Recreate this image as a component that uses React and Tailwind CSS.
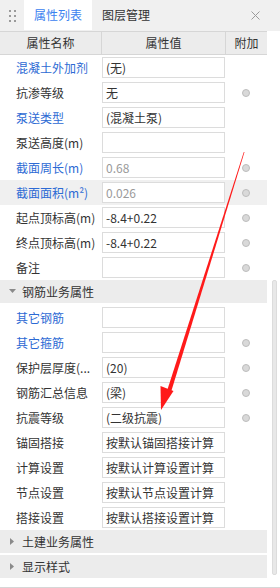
import React from "react";

const rows1 = [
  { label: "混凝土外加剂", blue: true, value: "(无)", dot: false },
  { label: "抗渗等级", value: "无", dot: true },
  { label: "泵送类型", blue: true, value: "(混凝土泵)", dot: false },
  { label: "泵送高度(m)", value: "", dot: false },
  { label: "截面周长(m)", blue: true, value: "0.68", gray: true, dot: true },
  { label: "截面面积(m²)", blue: true, value: "0.026", gray: true, dot: true, hl: true },
  { label: "起点顶标高(m)", value: "-8.4+0.22", dot: true },
  { label: "终点顶标高(m)", value: "-8.4+0.22", dot: true },
  { label: "备注", value: "", dot: true },
];

const rows2 = [
  { label: "其它钢筋", blue: true, value: "", dot: false },
  { label: "其它箍筋", blue: true, value: "", dot: true },
  { label: "保护层厚度(...", value: "(20)", dot: true },
  { label: "钢筋汇总信息", value: "(梁)", dot: true },
  { label: "抗震等级", value: "(二级抗震)", dot: true },
  { label: "锚固搭接", value: "按默认锚固搭接计算", dot: false },
  { label: "计算设置", value: "按默认计算设置计算", dot: false },
  { label: "节点设置", value: "按默认节点设置计算", dot: false },
  { label: "搭接设置", value: "按默认搭接设置计算", dot: false },
];

function Row({ r }) {
  return (
    <div className={`flex h-[25px] items-center ${r.hl ? "bg-[#f0f0f0]" : ""}`}>
      <div
        className={`w-[102px] pl-[16px] whitespace-nowrap overflow-hidden text-[12px] ${
          r.blue ? "text-[#2d6ad4]" : "text-[#333333]"
        }`}
      >
        {r.label}
      </div>
      <div
        className={`w-[123px] h-[21px] border border-[#dcdcdc] bg-white flex items-center pl-[3px] text-[12px] whitespace-nowrap overflow-hidden ${
          r.gray ? "text-[#9a9a9a]" : "text-[#333333]"
        }`}
      >
        {r.value}
      </div>
      <div className="flex-1 flex items-center justify-center">
        {r.dot && (
          <div className="w-[8px] h-[8px] rounded-full bg-[#d9d9d9] border border-[#bdbdbd]" />
        )}
      </div>
    </div>
  );
}

function Group({ label, open }) {
  return (
    <div className="h-[25px]">
      <div className="h-[23px] bg-[#ececec] flex items-center text-[12px] text-[#333333]">
        <div className="w-[22px] flex items-center justify-center pl-[2px]">
          {open ? (
            <svg width="7" height="5" viewBox="0 0 7 5">
              <path d="M0 0 L7 0 L3.5 4 Z" fill="#8a8a8a" />
            </svg>
          ) : (
            <svg width="5" height="7" viewBox="0 0 5 7">
              <path d="M0 0 L4 3.5 L0 7 Z" fill="#8a8a8a" />
            </svg>
          )}
        </div>
        <span>{label}</span>
      </div>
    </div>
  );
}

export default function App() {
  return (
    <div
      className="relative w-[280px] h-[588px] bg-white overflow-hidden flex flex-col"
      style={{ fontFamily: '"Noto Sans CJK SC", "Noto Sans", sans-serif' }}
    >
      {/* tab bar */}
      <div className="h-[31px] bg-[#f0f0f0] flex items-stretch shrink-0">
        <div className="w-[24px] flex items-center justify-center">
          <div className="grid grid-cols-2 gap-x-[3px] gap-y-[3px]">
            {[0, 1, 2, 3, 4, 5].map((i) => (
              <div key={i} className="w-[2px] h-[2px] bg-[#9a9a9a]" />
            ))}
          </div>
        </div>
        <div className="w-[68px] h-[30px] bg-white flex items-center justify-center text-[12px] text-[#3b82f0]">
          属性列表
        </div>
        <div className="w-[68px] flex items-center justify-center text-[12px] text-[#333333] pb-[1px]">
          图层管理
        </div>
        <div className="flex-1" />
        <div className="w-[38px] flex items-center justify-center pr-[20px] pl-[8px]">
          <svg width="9" height="9" viewBox="0 0 9 9">
            <path d="M0.5 0.5 L8.5 8.5 M8.5 0.5 L0.5 8.5" stroke="#9a9a9a" strokeWidth="1" />
          </svg>
        </div>
      </div>

      <div className="flex flex-1">
        <div className="w-[267px] flex flex-col">
          {/* header */}
          <div className="h-[24px] bg-[#ececec] border-t border-b border-[#d6d6d6] flex text-[12px] text-[#333333]">
            <div className="w-[102px] border-r border-[#d6d6d6] flex items-center justify-center">
              属性名称
            </div>
            <div className="w-[124px] border-r border-[#d6d6d6] flex items-center justify-center">
              属性值
            </div>
            <div className="flex-1 flex items-center justify-center">附加</div>
          </div>
          {rows1.map((r, i) => (
            <Row key={i} r={r} />
          ))}
          <Group label="钢筋业务属性" open />
          {rows2.map((r, i) => (
            <Row key={i} r={r} />
          ))}
          <Group label="土建业务属性" />
          <Group label="显示样式" />
        </div>
        <div className="flex-1 flex justify-center pt-[249px]">
          <div className="w-[5px] h-[295px] bg-[#e8e8e8] border border-[#dcdcdc] rounded-[2px] ml-[2px]" />
        </div>
      </div>
      <div className="h-[3px] border-b border-[#d6d6d6] shrink-0" />

      {/* red arrow annotation */}
      <svg className="absolute left-0 top-0 pointer-events-none" width="280" height="588" viewBox="0 0 280 588">
        <polygon points="244.5,152 243.8,152 167.3,390 171.2,391.5" fill="#ff1a1a" />
        <polygon points="161,410 160.5,386 173.5,391" fill="#ff1a1a" />
      </svg>
    </div>
  );
}
